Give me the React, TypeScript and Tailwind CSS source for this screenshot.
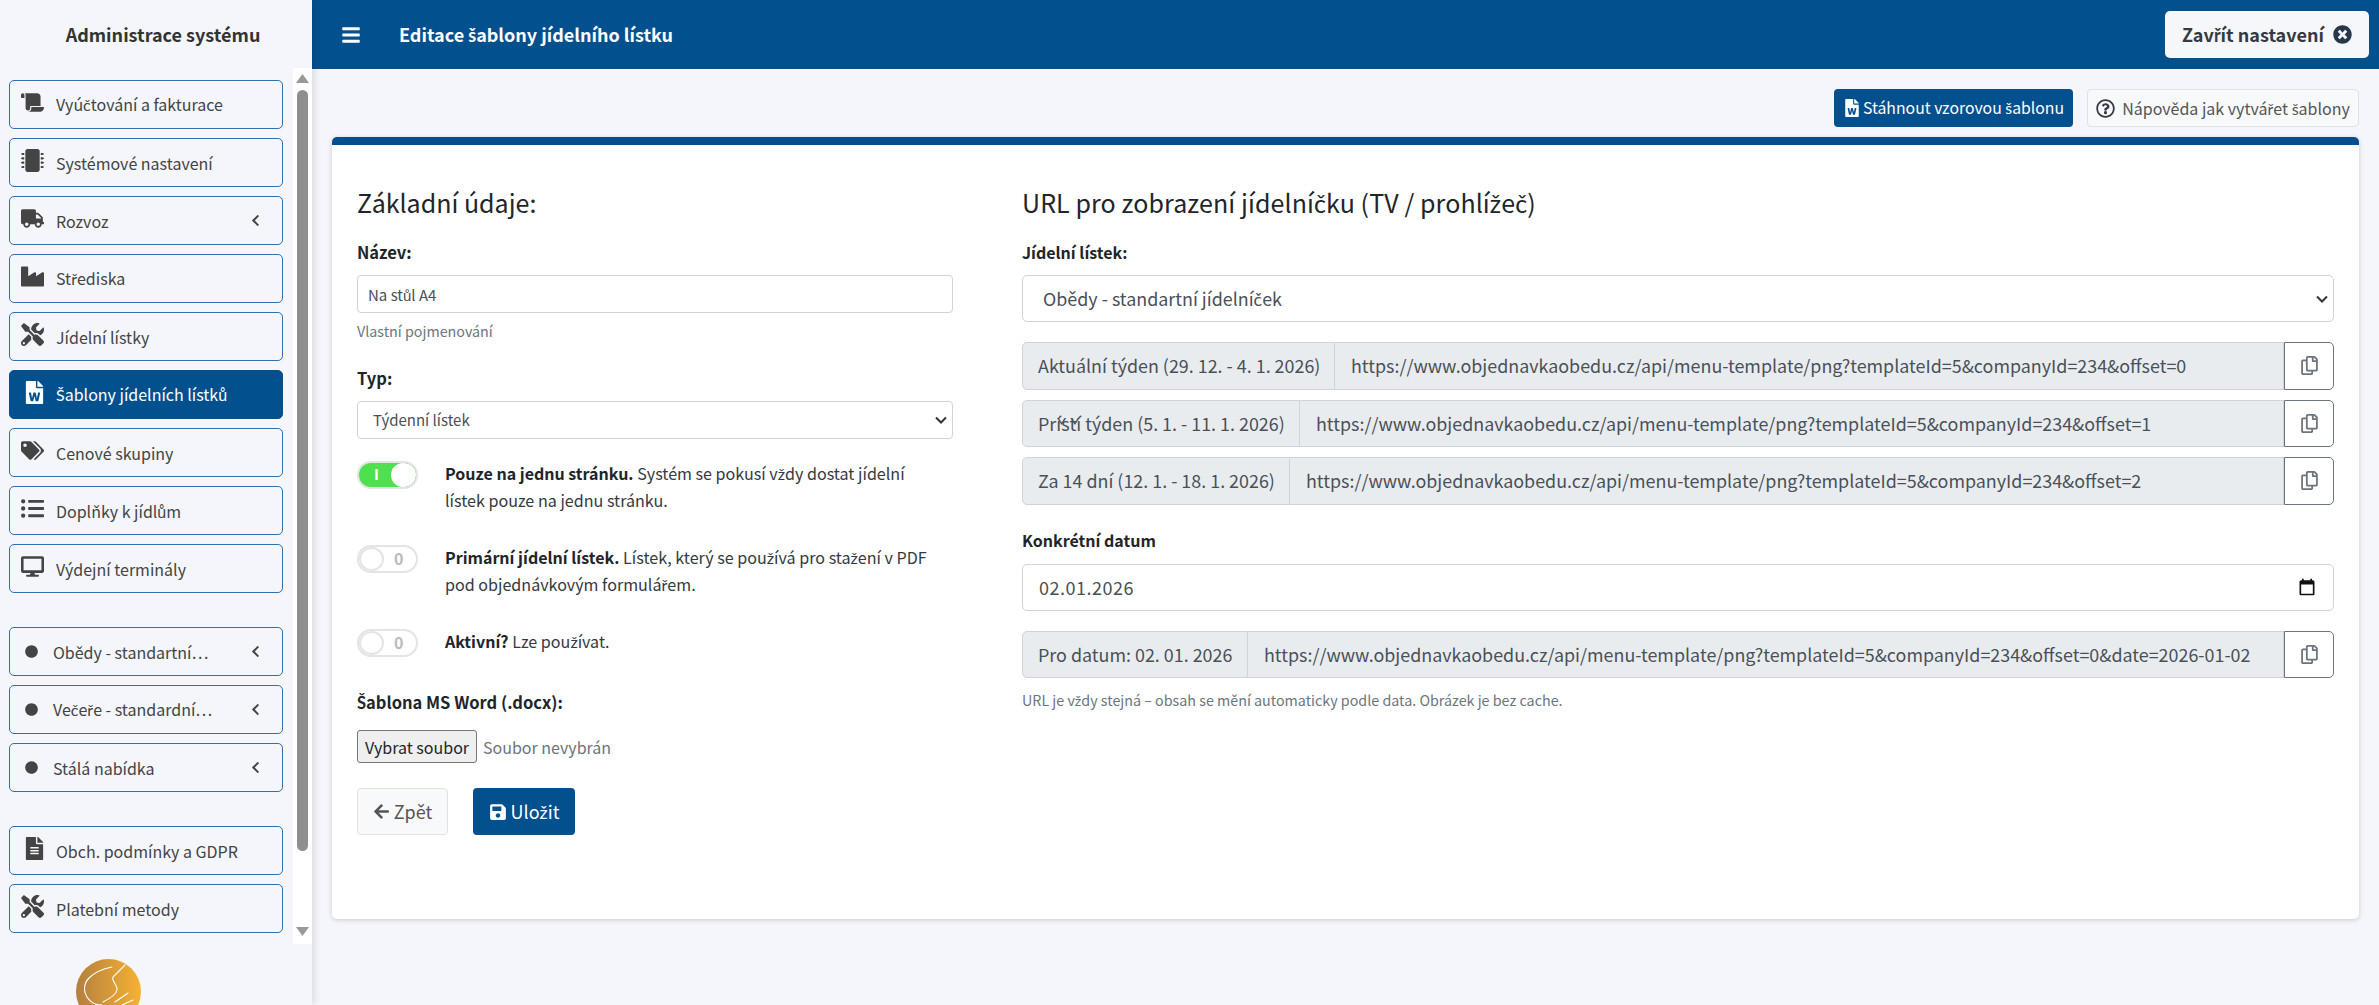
import { ReactNode } from "react";
import {
  FaArrowLeft, FaBars, FaChevronLeft, FaCircle, FaDesktop, FaFileAlt, FaFileWord, FaIndustry, FaListUl,
  FaMicrochip, FaRegCopy, FaRegQuestionCircle, FaSave, FaScroll, FaTags, FaTimesCircle, FaTools, FaTruck,
} from "react-icons/fa";

const BASE_URL = "https://www.objednavkaobedu.cz/api/menu-template/png?templateId=5&companyId=234";

function cz(text: string): ReactNode {
  return text.split(/([ščřžŠČŘŽ])/).map((part, index) =>
    index % 2 === 1 ? <span key={index} className="font-['Lato',sans-serif]">{part}</span> : part
  );
}

function NavItem({ icon, label, active, chevron, className = "" }: { icon: ReactNode, label: string, active?: boolean, chevron?: boolean, className?: string }) {
  return (
    <div className={`flex h-[49px] shrink-0 items-center rounded-[5px] border pl-[11px] ${active ? "border-[#03508f] bg-[#03508f] text-white" : "border-[#2f70b0] text-[#444]"} ${className}`}>
      <span className="-mt-1 flex w-[35px] shrink-0 text-[23px]">{icon}</span>
      <span className="text-[16px] leading-6">{cz(label)}</span>
      {chevron && <FaChevronLeft className="ml-auto mr-[20px] shrink-0 text-[13px]" />}
    </div>
  );
}

function GroupItem({ label, className = "" }: { label: string, className?: string }) {
  return (
    <div className={`flex h-[49px] shrink-0 items-center rounded-[5px] border border-[#2f70b0] pl-[15px] text-[#444] ${className}`}>
      <FaCircle className="shrink-0 text-[13px]" />
      <span className="ml-[15px] text-[16px] leading-6">{cz(label)}</span>
      <FaChevronLeft className="ml-auto mr-[20px] shrink-0 text-[13px]" />
    </div>
  );
}

function Sidebar() {
  return (
    <aside className="relative z-10 flex h-full w-[312px] shrink-0 flex-col overflow-hidden bg-[#f4f6fb] shadow-[2px_0_8px_rgba(0,0,0,0.12)]">
      <div className="flex h-[68px] shrink-0 items-center justify-center pl-[14px] text-[18px] font-bold text-[#333]">Administrace systému</div>
      <div className="flex h-[876px] shrink-0">
        <nav className="flex w-[293px] shrink-0 flex-col gap-[9px] pl-[9px] pr-[10px] pt-[12px]">
          <NavItem icon={<FaScroll />} label="Vyúčtování a fakturace" />
          <NavItem icon={<FaMicrochip />} label="Systémové nastavení" />
          <NavItem icon={<FaTruck />} label="Rozvoz" chevron />
          <NavItem icon={<FaIndustry />} label="Střediska" />
          <NavItem icon={<FaTools />} label="Jídelní lístky" />
          <NavItem icon={<FaFileWord className="ml-[2px]" />} label="Šablony jídelních lístků" active />
          <NavItem icon={<FaTags />} label="Cenové skupiny" />
          <NavItem icon={<FaListUl />} label="Doplňky k jídlům" />
          <NavItem icon={<FaDesktop />} label="Výdejní terminály" />
          <GroupItem label="Obědy - standartní…" className="mt-[25px]" />
          <GroupItem label="Večeře - standardní…" />
          <GroupItem label="Stálá nabídka" />
          <NavItem icon={<FaFileAlt className="ml-[2px]" />} label="Obch. podmínky a GDPR" className="mt-[25px]" />
          <NavItem icon={<FaTools />} label="Platební metody" />
        </nav>
        <div className="flex w-[19px] shrink-0 flex-col items-center bg-white">
          <svg className="mt-[6px] shrink-0" width="13" height="9" viewBox="0 0 13 9"><path d="M6.5 0L13 9H0z" fill="#999" /></svg>
          <div className="mt-[7px] h-[761px] w-[11px] shrink-0 rounded-[6px] bg-[#8e8e8e]" />
          <svg className="mt-[76px] shrink-0" width="13" height="9" viewBox="0 0 13 9"><path d="M0 0h13L6.5 9z" fill="#999" /></svg>
        </div>
      </div>
      <div className="pl-[76px] pt-[15px]">
        <svg width="65" height="65" viewBox="0 0 65 65" fill="none" stroke="#fff" strokeWidth="1.1" strokeLinecap="round">
          <defs>
            <linearGradient id="logo" x1="0" x2="1" y1="0" y2="0">
              <stop offset="0" stopColor="#b47f3f" />
              <stop offset="1" stopColor="#f6b233" />
            </linearGradient>
          </defs>
          <circle cx="32.5" cy="32.5" r="32.5" fill="url(#logo)" stroke="none" />
          <path d="M36 8C26 10 19 13 13 19 8 24 7 32 11 38c3 5 9 8 15 8" />
          <path d="M49 6L37 18c-2 4 5 8 4 13-1 5-8 9-14 12" />
          <path d="M39 43l13-9M46 46l11-5" />
        </svg>
      </div>
    </aside>
  );
}

function Toggle({ on }: { on?: boolean }) {
  return (
    <div className={`relative mt-[1px] flex h-[28px] w-[61px] shrink-0 overflow-hidden rounded-full border-2 border-[#e4e4e4] ${on ? "bg-[#4fe04f]" : "bg-white"}`}>
      {on ? (
        <>
          <span className="ml-[15px] text-[15px] font-bold leading-[22px] text-white">I</span>
          <span className="absolute right-0 top-0 h-full w-[25px] rounded-full bg-white" />
        </>
      ) : (
        <>
          <span className="absolute left-0 top-0 h-full w-[25px] rounded-full border-2 border-[#e4e4e4] bg-white" />
          <span className="ml-[35px] text-[16px] font-bold leading-[22px] text-[#bbb]">0</span>
        </>
      )}
    </div>
  );
}

function SelectBox({ value, className }: { value: string, className: string }) {
  return (
    <div className={`flex w-full items-center justify-between border border-[#ced4da] bg-white pr-[5px] text-[#495057] ${className}`}>
      <span>{cz(value)}</span>
      <svg width="12" height="8" viewBox="0 0 12 8" fill="none" stroke="#333" strokeWidth="2"><path d="M1 1.5l5 5 5-5" /></svg>
    </div>
  );
}

function UrlRow({ label, url, addonWidth, className = "" }: { label: string, url: string, addonWidth: string, className?: string }) {
  return (
    <div className={`flex h-[47.5px] text-[17.9px] text-[#495057] ${className}`}>
      <div className={`flex shrink-0 items-center rounded-l-[5px] border border-[#ced4da] bg-[#e9ecef] pl-[15px] ${addonWidth}`}>{label}</div>
      <div className="flex min-w-0 flex-1 items-center border-y border-r border-[#ced4da] bg-[#e9ecef] pl-[16px]">{url}</div>
      <div className="flex w-[50px] shrink-0 items-center justify-center rounded-r-[5px] border border-[#6c757d] bg-white text-[#6c757d]">
        <FaRegCopy className="text-[19px]" />
      </div>
    </div>
  );
}

function Labeled({ title, children, height }: { title: string, children: string, height: string }) {
  return (
    <p className={`pr-[8px] text-[16.1px] leading-[27px] text-[#343a40] ${height}`}><b className="text-[16px] text-[#212529]">{cz(title)}</b> {cz(children)}</p>
  );
}

function LeftColumn() {
  return (
    <div className="w-[596px] shrink-0">
      <h2 className="h-[32px] text-[25px] leading-8 text-[#212529]">Základní údaje:</h2>
      <div className="mt-[22px] h-6 text-[16.5px] font-bold leading-6 text-[#212529]">Název:</div>
      <input readOnly value="Na stůl A4" className="mt-[11px] h-[38px] w-full rounded-[4px] border border-[#ced4da] bg-white pl-[10px] text-[15px] text-[#495057]" />
      <div className="mt-[8px] h-5 text-[14.3px] leading-5 text-[#6c757d]">Vlastní pojmenování</div>
      <div className="mt-[25px] h-6 text-[16.5px] font-bold leading-6 text-[#212529]">Typ:</div>
      <SelectBox value="Týdenní lístek" className="mt-[11px] h-[38px] rounded-[4px] pl-[15px] text-[15px]" />
      <div className="mt-[21px] flex gap-[27px]">
        <Toggle on />
        <Labeled height="h-[54px]" title="Pouze na jednu stránku.">Systém se pokusí vždy dostat jídelní lístek pouze na jednu stránku.</Labeled>
      </div>
      <div className="mt-[30px] flex gap-[27px]">
        <Toggle />
        <Labeled height="h-[54px]" title="Primární jídelní lístek.">Lístek, který se používá pro stažení v PDF pod objednávkovým formulářem.</Labeled>
      </div>
      <div className="mt-[30px] flex gap-[27px]">
        <Toggle />
        <Labeled height="h-[27px]" title="Aktivní?">Lze používat.</Labeled>
      </div>
      <div className="mt-[33px] h-6 text-[16.5px] font-bold leading-6 text-[#212529]">{cz("Šablona MS Word (.docx):")}</div>
      <div className="mt-[16px] flex h-[33px] items-center text-[16px]">
        <button className="h-full w-[120px] rounded-[3px] border border-[#767676] bg-[#efefef] text-[#212529]">Vybrat soubor</button>
        <span className="ml-[6px] text-[#6c757d]">Soubor nevybrán</span>
      </div>
      <div className="mt-[25px] flex h-[47px] gap-[25px] text-[18px]">
        <button className="flex w-[91px] items-center justify-center gap-[4px] rounded-[4px] border border-[#dee2e6] bg-[#f8f9fa] text-[#555]">
          <FaArrowLeft className="text-[17px]" />Zpět
        </button>
        <button className="flex w-[102px] items-center justify-center gap-[4px] rounded-[4px] bg-[#03508f] text-white">
          <FaSave className="text-[18px]" /><span>{cz("Uložit")}</span>
        </button>
      </div>
    </div>
  );
}

function RightColumn() {
  return (
    <div className="min-w-0 flex-1">
      <h2 className="h-[32px] text-[25px] leading-8 tracking-[0.1px] text-[#212529]">{cz("URL pro zobrazení jídelníčku (TV / prohlížeč)")}</h2>
      <div className="mt-[22px] h-6 font-bold leading-6 text-[#212529]">{cz("Jídelní lístek:")}</div>
      <SelectBox value="Obědy - standartní jídelníček" className="mt-[11px] h-[47px] rounded-[5px] pl-[20px] text-[17.9px]" />
      <UrlRow className="mt-[20px]" addonWidth="w-[313px]" label="Aktuální týden (29. 12. - 4. 1. 2026)" url={`${BASE_URL}&offset=0`} />
      <UrlRow className="mt-[10px]" addonWidth="w-[278px]" label="Příští týden (5. 1. - 11. 1. 2026)" url={`${BASE_URL}&offset=1`} />
      <UrlRow className="mt-[10px]" addonWidth="w-[268px]" label="Za 14 dní (12. 1. - 18. 1. 2026)" url={`${BASE_URL}&offset=2`} />
      <div className="mt-[23px] h-6 font-bold leading-6 text-[#212529]">Konkrétní datum</div>
      <div className="mt-[12px] flex h-[47px] items-center justify-between rounded-[5px] border border-[#ced4da] bg-white pl-[16px] pr-[16px] text-[18px] tracking-[0.5px] text-[#495057]">
        <span>02.01.2026</span>
        <svg width="20" height="20" viewBox="0 0 24 24" fill="#111"><path d="M19 4h-1V2h-2v2H8V2H6v2H5c-1.1 0-2 .9-2 2v14c0 1.1.9 2 2 2h14c1.1 0 2-.9 2-2V6c0-1.1-.9-2-2-2zm0 16H5V9h14v11z" /></svg>
      </div>
      <UrlRow className="mt-[20px]" addonWidth="w-[226px]" label="Pro datum: 02. 01. 2026" url={`${BASE_URL}&offset=0&date=2026-01-02`} />
      <div className="mt-[12px] h-5 text-[14.3px] leading-5 text-[#6c757d]">{cz("URL je vždy stejná – obsah se mění automaticky podle data. Obrázek je bez cache.")}</div>
    </div>
  );
}

export default function App() {
  return (
    <div className="flex h-[1005px] w-full overflow-hidden bg-[#f4f6fb] text-[16px] font-['Noto_Sans_CJK_SC','Liberation_Sans',sans-serif]">
      <Sidebar />
      <main className="flex min-w-0 flex-1 flex-col">
        <header className="flex h-[69px] shrink-0 items-center justify-between bg-[#03508f] pl-[29px] pr-[10px] text-white">
          <div className="flex items-center">
            <FaBars className="text-[20px]" />
            <span className="ml-[38px] text-[18px] font-bold">{cz("Editace šablony jídelního lístku")}</span>
          </div>
          <button className="flex h-[47px] w-[204px] items-center justify-center gap-[9px] rounded-[5px] bg-[#f6f7fb] text-[18px] font-bold text-[#343a40]">
            <span>{cz("Zavřít nastavení")}</span> <FaTimesCircle className="text-[19px] text-[#26384a]" />
          </button>
        </header>
        <div className="flex justify-end gap-[14px] pr-[20px] pt-[20px]">
          <button className="flex h-[38px] w-[239px] items-center justify-center gap-[2px] rounded-[4px] bg-[#03508f] text-[15.8px] text-white">
            <FaFileWord className="text-[18px]" /><span>{cz("Stáhnout vzorovou šablonu")}</span>
          </button>
          <button className="flex h-[38px] w-[272px] items-center justify-center gap-[7px] rounded-[4px] border border-[#dee2e6] bg-[#f8f9fa] text-[16px] text-[#555]">
            <FaRegQuestionCircle className="text-[19px] text-[#343a40]" /><span>{cz("Nápověda jak vytvářet šablony")}</span>
          </button>
        </div>
        <section className="ml-[20px] mr-[20px] mt-[10px] flex gap-[69px] rounded-[5px] border-t-[8px] border-[#03508f] bg-white pb-[84px] pl-[25px] pr-[25px] pt-[41px] shadow-[0_1px_5px_rgba(0,0,0,0.18)]">
          <LeftColumn />
          <RightColumn />
        </section>
      </main>
    </div>
  );
}
